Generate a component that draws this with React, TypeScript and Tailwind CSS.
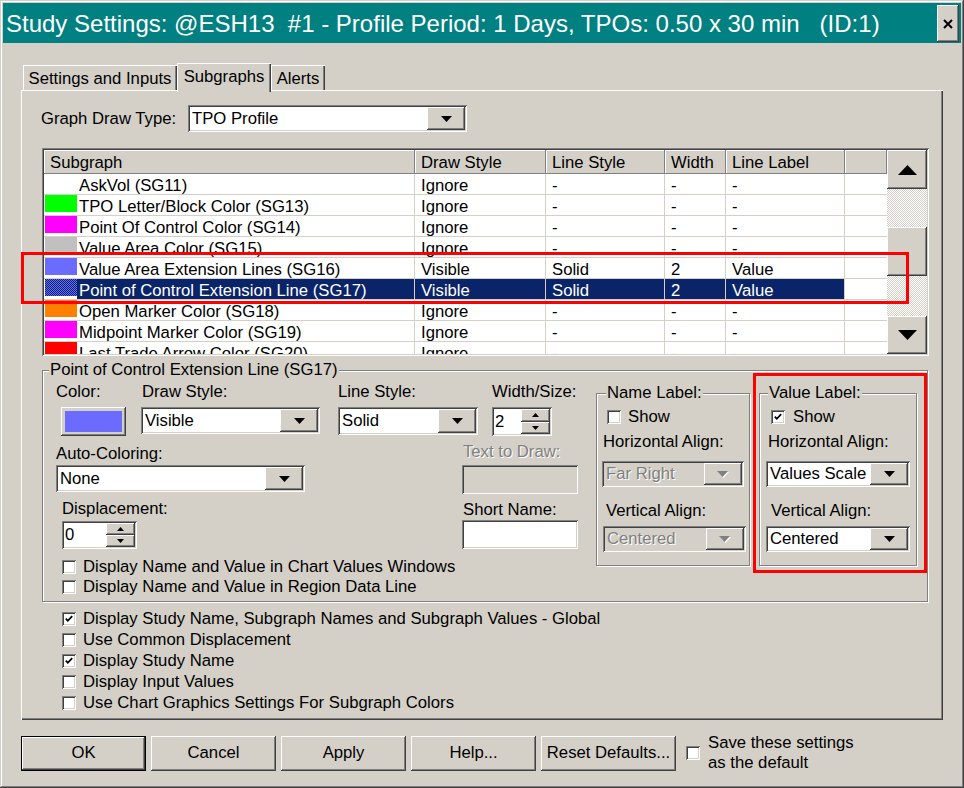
import React from "react";

const RAISED =
  "shadow-[inset_-1px_-1px_#404040,inset_1px_1px_#ffffff,inset_-2px_-2px_#808080,inset_2px_2px_#d4d0c8]";
const SUNKEN =
  "shadow-[inset_1px_1px_#808080,inset_-1px_-1px_#ffffff,inset_2px_2px_#404040,inset_-2px_-2px_#d4d0c8]";
const DIS = "text-[#808080] [text-shadow:1px_1px_0_#ffffff]";

function DownTri({ w, h, color = "#000000" }: { w: number; h: number; color?: string }) {
  return (
    <svg width={w} height={h} viewBox={`0 0 ${w} ${h}`}>
      <polygon points={`0,0 ${w},0 ${w / 2},${h}`} fill={color} />
    </svg>
  );
}
function UpTri({ w, h }: { w: number; h: number }) {
  return (
    <svg width={w} height={h} viewBox={`0 0 ${w} ${h}`}>
      <polygon points={`${w / 2},0 ${w},${h} 0,${h}`} fill="#000000" />
    </svg>
  );
}

function Combo({ value, className, disabled }: { value: string; className: string; disabled?: boolean }) {
  return (
    <div className={`flex p-[2px] ${SUNKEN} ${disabled ? "bg-[#d4d0c8]" : "bg-white"} ${className}`}>
      <div
        className={`flex-1 min-w-0 overflow-hidden whitespace-nowrap pl-[2px] flex items-center ${
          disabled ? DIS : "text-black"
        }`}
      >
        {value}
      </div>
      <div className={`w-[38px] shrink-0 flex items-center justify-center bg-[#d4d0c8] ${RAISED}`}>
        {disabled ? (
          <svg width="12" height="7" viewBox="0 0 12 7">
            <polygon points="1,1 12,1 6.5,7" fill="#ffffff" />
            <polygon points="0,0 11,0 5.5,6" fill="#808080" />
          </svg>
        ) : (
          <DownTri w={11} h={6} />
        )}
      </div>
    </div>
  );
}

function Spin({ value, className }: { value: string; className: string }) {
  return (
    <div className={`flex p-[2px] bg-white ${SUNKEN} ${className}`}>
      <div className="flex-1 pl-[1px] flex items-center">{value}</div>
      <div className="w-[29px] flex flex-col">
        <div className={`flex-1 bg-[#d4d0c8] ${RAISED} flex items-center justify-center`}>
          <UpTri w={7} h={4} />
        </div>
        <div className={`flex-1 bg-[#d4d0c8] ${RAISED} flex items-center justify-center`}>
          <DownTri w={7} h={4} />
        </div>
      </div>
    </div>
  );
}

function Check({ checked }: { checked?: boolean }) {
  return (
    <div className={`w-[14px] h-[14px] shrink-0 bg-white ${SUNKEN} flex items-center justify-center`}>
      {checked && (
        <svg width="14" height="14" viewBox="0 0 14 14">
          <path d="M3.8 6.6 L5.8 8.8 L10.2 4.2" fill="none" stroke="#000000" strokeWidth="1.8" />
        </svg>
      )}
    </div>
  );
}

function Group({
  label,
  className,
  labelClass,
  children,
}: {
  label: string;
  className: string;
  labelClass: string;
  children: React.ReactNode;
}) {
  return (
    <div className={`relative border border-[#808080] shadow-[inset_1px_1px_#ffffff,1px_1px_#ffffff] ${className}`}>
      <span className={`absolute top-[-11px] bg-[#d4d0c8] px-[1px] leading-[20px] whitespace-nowrap ${labelClass}`}>
        {label}
      </span>
      {children}
    </div>
  );
}

type Row = {
  name: string;
  color: string;
  ds: string;
  ls: string;
  w: string;
  ll: string;
  selected?: boolean;
};

const ROWS: Row[] = [
  { name: "AskVol (SG11)", color: "bg-white", ds: "Ignore", ls: "-", w: "-", ll: "-" },
  { name: "TPO Letter/Block Color (SG13)", color: "bg-[#00ff00]", ds: "Ignore", ls: "-", w: "-", ll: "-" },
  { name: "Point Of Control Color (SG14)", color: "bg-[#ff00ff]", ds: "Ignore", ls: "-", w: "-", ll: "-" },
  { name: "Value Area Color (SG15)", color: "bg-[#c0c0c0]", ds: "Ignore", ls: "-", w: "-", ll: "-" },
  { name: "Value Area Extension Lines (SG16)", color: "bg-[#6b6bff]", ds: "Visible", ls: "Solid", w: "2", ll: "Value" },
  {
    name: "Point of Control Extension Line (SG17)",
    color:
      "bg-[image:repeating-conic-gradient(#6b6bff_0_25%,#0a246a_0_50%)] bg-[length:2px_2px]",
    ds: "Visible",
    ls: "Solid",
    w: "2",
    ll: "Value",
    selected: true,
  },
  { name: "Open Marker Color (SG18)", color: "bg-[#ff8000]", ds: "Ignore", ls: "-", w: "-", ll: "-" },
  { name: "Midpoint Marker Color (SG19)", color: "bg-[#ff00ff]", ds: "Ignore", ls: "-", w: "-", ll: "-" },
  { name: "Last Trade Arrow Color (SG20)", color: "bg-[#ff0000]", ds: "Ignore", ls: "-", w: "-", ll: "-" },
];

const HEAD = "shadow-[inset_-1px_-1px_#808080,inset_1px_1px_#ffffff] bg-[#d4d0c8] pl-[6px] pt-[1px] flex items-center";

function Table() {
  return (
    <div className={`relative mt-[16px] ml-[1px] w-[887px] h-[208px] p-[2px] bg-white ${SUNKEN} flex`}>
      <div className="w-[843px] flex flex-col overflow-hidden">
        <div className="flex h-[24px] shrink-0">
          <div className={`w-[371px] ${HEAD}`}>Subgraph</div>
          <div className={`w-[131px] ${HEAD}`}>Draw Style</div>
          <div className={`w-[119px] ${HEAD}`}>Line Style</div>
          <div className={`w-[61px] ${HEAD}`}>Width</div>
          <div className={`w-[119px] ${HEAD}`}>Line Label</div>
          <div className={`w-[42px] ${HEAD}`}></div>
        </div>
        {ROWS.map((r) => {
          const sel = r.selected;
          const cell = `border-r border-[#d4d0c8] pl-[6px] pt-[3px] flex items-center whitespace-nowrap ${
            sel ? "bg-[#0a246a] text-white" : ""
          }`;
          return (
            <div key={r.name} className="flex h-[21px] shrink-0 border-b border-[#d4d0c8]">
              <div className="w-[371px] flex border-r border-[#d4d0c8]">
                <div className={`w-[32px] h-[17px] ml-[1px] shrink-0 ${r.color}`}></div>
                <div
                  className={`flex-1 pl-[2px] pt-[3px] flex items-center whitespace-nowrap ${
                    sel ? "bg-[#0a246a] text-white" : ""
                  }`}
                >
                  {r.name}
                </div>
              </div>
              <div className={`w-[131px] ${cell}`}>{r.ds}</div>
              <div className={`w-[119px] ${cell}`}>{r.ls}</div>
              <div className={`w-[61px] ${cell}`}>{r.w}</div>
              <div className={`w-[119px] ${cell}`}>{r.ll}</div>
              <div className="w-[42px]"></div>
            </div>
          );
        })}
      </div>
      <div className="w-[40px] flex flex-col">
        <div className={`h-[39px] shrink-0 bg-[#d4d0c8] ${RAISED} flex items-center justify-center`}>
          <UpTri w={19} h={10} />
        </div>
        <div className="h-[38px] shrink-0 bg-[image:repeating-conic-gradient(#ffffff_0_25%,#d4d0c8_0_50%)] bg-[length:2px_2px]"></div>
        <div className={`h-[49px] shrink-0 bg-[#d4d0c8] ${RAISED}`}></div>
        <div className="h-[40px] shrink-0 bg-[image:repeating-conic-gradient(#ffffff_0_25%,#d4d0c8_0_50%)] bg-[length:2px_2px]"></div>
        <div className={`h-[38px] shrink-0 bg-[#d4d0c8] ${RAISED} flex items-center justify-center`}>
          <DownTri w={19} h={10} />
        </div>
      </div>
      <div className="absolute left-[-21px] top-[104px] w-[888px] h-[52px] border-[3px] border-[#ff0000] pointer-events-none"></div>
    </div>
  );
}

function Btn({ label, className }: { label: string; className: string }) {
  return (
    <div className={`h-[35px] bg-[#d4d0c8] flex items-center justify-center ${RAISED} ${className}`}>{label}</div>
  );
}

export default function App() {
  const bottomChecks: [string, boolean][] = [
    ["Display Study Name, Subgraph Names and Subgraph Values - Global", true],
    ["Use Common Displacement", false],
    ["Display Study Name", true],
    ["Display Input Values", false],
    ["Use Chart Graphics Settings For Subgraph Colors", false],
  ];
  return (
    <div
      className={`w-[964px] h-[788px] bg-[#d4d0c8] p-[3px] flex flex-col font-['Liberation_Sans',Arial,sans-serif] text-[16.7px] leading-[20px] text-black overflow-hidden shadow-[inset_-1px_-1px_#404040,inset_1px_1px_#d4d0c8,inset_-2px_-2px_#808080,inset_2px_2px_#ffffff]`}
    >
      {/* Title bar */}
      <div className="h-[40px] shrink-0 bg-[#008080] flex items-start justify-between">
        <span className="text-white text-[24px] leading-[40px] pt-[1px] whitespace-pre pl-[3px]">
          {"Study Settings: @ESH13  #1 - Profile Period: 1 Days, TPOs: 0.50 x 30 min   (ID:1)"}
        </span>
        <div className={`mt-[2px] mr-[2px] w-[22px] h-[37px] bg-[#d4d0c8] flex items-center justify-center ${RAISED}`}>
          <svg width="10" height="10" viewBox="0 0 10 10">
            <path d="M1 1 L9 9 M9 1 L1 9" stroke="#000000" strokeWidth="2" />
          </svg>
        </div>
      </div>

      <div className="pl-[18px] mt-[20px] flex flex-col">
        {/* Tabs */}
        <div className="relative z-10 flex items-end h-[29px] pl-[2px] mb-[-2px]">
          <div className="w-[154px] h-[25px] mb-[2px] pt-[4px] text-center bg-[#d4d0c8] shadow-[inset_1px_1px_#ffffff,inset_-1px_0_#404040,inset_-2px_0_#808080]">
            Settings and Inputs
          </div>
          <div className="w-[94px] h-[29px] pt-[4px] text-center bg-[#d4d0c8] shadow-[inset_1px_1px_#ffffff,inset_-1px_0_#404040,inset_-2px_0_#808080]">
            Subgraphs
          </div>
          <div className="w-[54px] h-[25px] mb-[2px] pt-[4px] text-center bg-[#d4d0c8] shadow-[inset_1px_1px_#ffffff,inset_-1px_0_#404040,inset_-2px_0_#808080]">
            Alerts
          </div>
        </div>

        {/* Panel */}
        <div className="relative w-[922px] h-[630px] pl-[20px] pt-[15px] flex flex-col shadow-[inset_1px_1px_#ffffff,inset_-1px_-1px_#404040,inset_-2px_-2px_#808080]">
          <div className="flex items-center h-[27px]">
            <span className="w-[147px] pt-[1px]">Graph Draw Type:</span>
            <Combo value="TPO Profile" className="w-[279px] h-[27px]" />
          </div>

          <Table />

          <Group
            label="Point of Control Extension Line (SG17)"
            labelClass="left-[6px]"
            className="mt-[14px] ml-[1px] w-[886px] h-[232px] flex"
          >
            <div className="w-[553px] flex flex-col pt-[11px] pl-[13px]">
              <div className="flex">
                <div className="flex flex-col w-[86px]">
                  <span>Color:</span>
                  <div className={`mt-[5px] ml-[5px] w-[65px] h-[29px] p-[4px] bg-[#d4d0c8] ${RAISED}`}>
                    <div className="w-full h-full bg-[#6b6bff]"></div>
                  </div>
                </div>
                <div className="flex flex-col w-[196px]">
                  <span>Draw Style:</span>
                  <Combo value="Visible" className="mt-[5px] ml-[-1px] w-[179px] h-[27px]" />
                </div>
                <div className="flex flex-col w-[154px]">
                  <span>Line Style:</span>
                  <Combo value="Solid" className="mt-[5px] w-[140px] h-[28px]" />
                </div>
                <div className="flex flex-col">
                  <span>Width/Size:</span>
                  <Spin value="2" className="mt-[5px] w-[60px] h-[29px]" />
                </div>
              </div>

              <div className="flex mt-[8px]">
                <div className="flex flex-col w-[406px]">
                  <span>Auto-Coloring:</span>
                  <Combo value="None" className="mt-[1px] w-[249px] h-[27px]" />
                  <span className="mt-[7px] ml-[6px]">Displacement:</span>
                  <Spin value="0" className="mt-[2px] ml-[6px] w-[75px] h-[28px]" />
                </div>
                <div className="flex flex-col">
                  <span className={`mt-[-2px] ml-[1px] ${DIS}`}>Text to Draw:</span>
                  <div className={`mt-[3px] w-[116px] h-[29px] bg-[#d4d0c8] ${SUNKEN}`}></div>
                  <span className="mt-[6px] ml-[1px]">Short Name:</span>
                  <div className={`w-[116px] h-[29px] bg-white ${SUNKEN}`}></div>
                </div>
              </div>

              <div className="flex flex-col mt-[8px] ml-[6px]">
                <div className="h-[20px] flex items-center gap-[7px]">
                  <Check />
                  <span>Display Name and Value in Chart Values Windows</span>
                </div>
                <div className="h-[20px] flex items-center gap-[7px]">
                  <Check />
                  <span>Display Name and Value in Region Data Line</span>
                </div>
              </div>
            </div>

            <div className="flex items-start">
              <Group label="Name Label:" labelClass="left-[9px]" className="mt-[22px] w-[154px] h-[173px] flex flex-col">
                <div className="mt-[13px] ml-[10px] h-[20px] flex items-center gap-[7px]">
                  <Check />
                  <span>Show</span>
                </div>
                <span className="mt-[5px] ml-[6px]">Horizontal Align:</span>
                <Combo disabled value="Far Right" className="mt-[9px] ml-[5px] w-[142px] h-[26px]" />
                <span className="mt-[14px] ml-[9px]">Vertical Align:</span>
                <Combo disabled value="Centered" className="mt-[5px] ml-[6px] w-[143px] h-[26px]" />
              </Group>

              <div className="mt-[2px] ml-[3px] border-[3px] border-[#ff0000] pt-[17px] pl-[3px] pr-[7px] pb-[4px]">
                <Group label="Value Label:" labelClass="left-[8px]" className="w-[158px] h-[173px] flex flex-col">
                  <div className="mt-[13px] ml-[11px] h-[20px] flex items-center gap-[8px]">
                    <Check checked />
                    <span>Show</span>
                  </div>
                  <span className="mt-[5px] ml-[8px]">Horizontal Align:</span>
                  <Combo value="Values Scale" className="mt-[9px] ml-[6px] w-[144px] h-[26px]" />
                  <span className="mt-[14px] ml-[11px]">Vertical Align:</span>
                  <Combo value="Centered" className="mt-[5px] ml-[6px] w-[144px] h-[26px]" />
                </Group>
              </div>
            </div>
          </Group>

          <div className="mt-[6px] ml-[21px] flex flex-col">
            {bottomChecks.map(([t, c]) => (
              <div key={t} className="h-[21px] flex items-center gap-[7px]">
                <Check checked={c} />
                <span>{t}</span>
              </div>
            ))}
          </div>
        </div>

        {/* Buttons */}
        <div className="flex items-center mt-[13px] gap-[5px]">
          <Btn label="OK" className="w-[125px] border border-black" />
          <Btn label="Cancel" className="w-[125px]" />
          <Btn label="Apply" className="w-[125px]" />
          <Btn label="Help..." className="w-[125px]" />
          <Btn label="Reset Defaults..." className="w-[135px]" />
          <div className="ml-[5px] flex items-center gap-[8px]">
            <Check />
            <div className="flex flex-col">
              <span>Save these settings</span>
              <span>as the default</span>
            </div>
          </div>
        </div>
      </div>
    </div>
  );
}
